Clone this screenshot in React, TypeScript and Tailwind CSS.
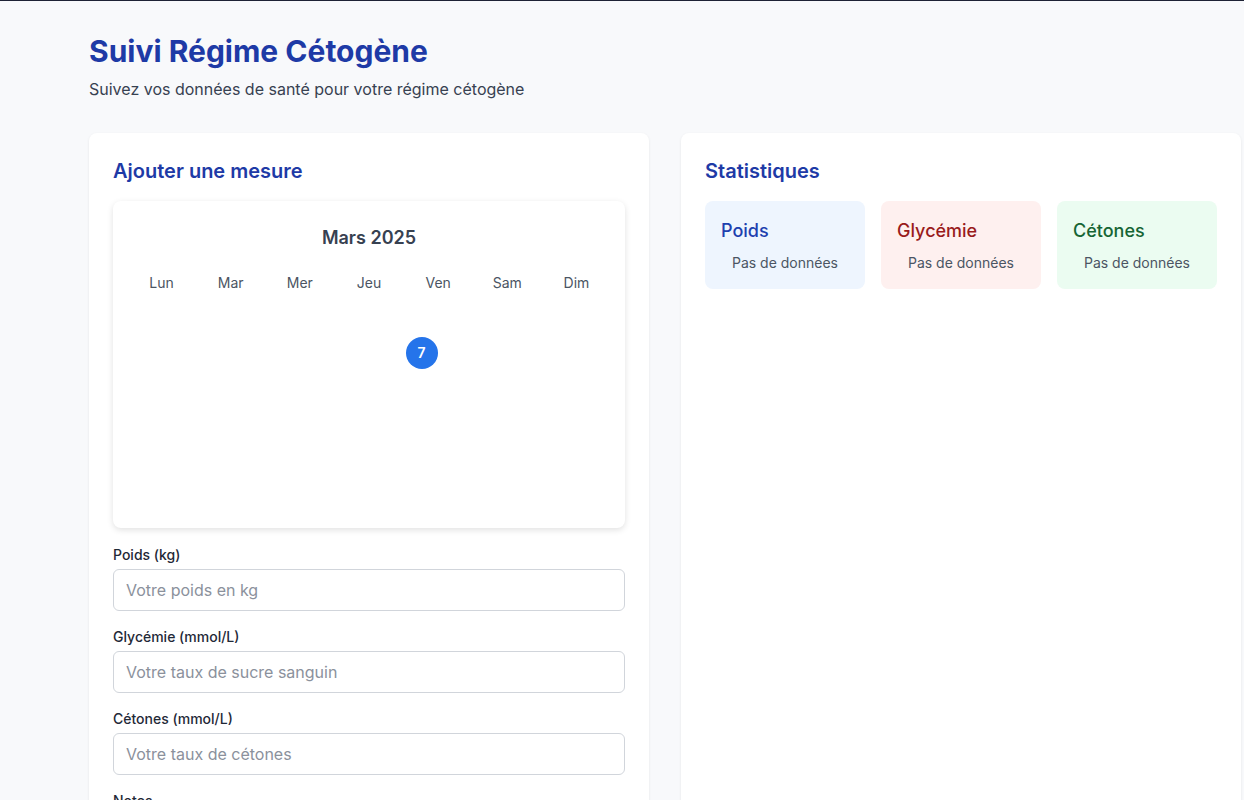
import React from 'react';

const days = ['Lun', 'Mar', 'Mer', 'Jeu', 'Ven', 'Sam', 'Dim'];

const fields = [
  { label: 'Poids (kg)', placeholder: 'Votre poids en kg' },
  { label: 'Glycémie (mmol/L)', placeholder: 'Votre taux de sucre sanguin' },
  { label: 'Cétones (mmol/L)', placeholder: 'Votre taux de cétones' },
];

const stats = [
  { title: 'Poids', box: 'bg-[#eef5fe]', text: 'text-[#1e40af]' },
  { title: 'Glycémie', box: 'bg-[#fef0ef]', text: 'text-[#991b1b]' },
  { title: 'Cétones', box: 'bg-[#ebfcf1]', text: 'text-[#166534]' },
];

function Calendar() {
  return (
    <div className="h-[327px] rounded-lg bg-white px-[14px] pt-[23px] shadow-[0_2px_6px_rgba(0,0,0,0.12)]">
      <h3 className="text-center text-lg font-semibold text-[#374151]">Mars 2025</h3>
      <div className="mt-[21px] grid grid-cols-7">
        {days.map((d) => (
          <div key={d} className="text-center text-sm text-[#4b5563]">
            {d}
          </div>
        ))}
      </div>
      <div className="mt-[44px] grid grid-cols-7">
        {days.map((d, i) => (
          <div key={d} className="h-8 pl-[2px]">
            {i === 4 && (
              <div className="flex h-8 w-8 items-center justify-center rounded-full bg-[#2574ea] text-sm font-semibold text-white">
                7
              </div>
            )}
          </div>
        ))}
      </div>
    </div>
  );
}

export default function App() {
  return (
    <div
      className="min-h-screen overflow-hidden bg-[#f8f9fb]"
      style={{ fontFamily: 'Inter, "Noto Sans", sans-serif' }}
    >
      <div className="h-px bg-[#1e2235]" />
      <div className="ml-[89px] w-[1152px] pt-8">
        <h1 className="text-3xl font-bold text-[#1e3aa6]">Suivi Régime Cétogène</h1>
        <p className="mt-2 text-base text-[#374151]">Suivez vos données de santé pour votre régime cétogène</p>

        <div className="mt-8 grid grid-cols-2 gap-8">
          {/* Formulaire */}
          <div className="rounded-lg bg-white p-6 pb-10 shadow-[0_1px_3px_rgba(0,0,0,0.08)]">
            <h2 className="text-xl font-semibold text-[#1e3aa6]">Ajouter une mesure</h2>
            <div className="mt-4">
              <Calendar />
            </div>
            <div className="mt-[17px] flex flex-col gap-4">
              {fields.map((f) => (
                <div key={f.label}>
                  <label className="mb-1 block text-sm font-medium text-[#1f2937]">{f.label}</label>
                  <input
                    type="text"
                    placeholder={f.placeholder}
                    className="w-full rounded-md border border-[#d1d5db] px-3 py-2 text-base text-[#111827] placeholder:text-[#8b919c] outline-none"
                  />
                </div>
              ))}
              <div>
                <label className="mb-1 block text-sm font-medium text-[#1f2937]">Notes</label>
                <textarea className="h-20 w-full rounded-md border border-[#d1d5db] px-3 py-2 text-base outline-none" />
              </div>
            </div>
          </div>

          {/* Statistiques */}
          <div className="min-h-[700px] rounded-lg bg-white p-6 shadow-[0_1px_3px_rgba(0,0,0,0.08)]">
            <h2 className="text-xl font-semibold text-[#1e3aa6]">Statistiques</h2>
            <div className="mt-4 grid grid-cols-3 gap-4">
              {stats.map((s) => (
                <div key={s.title} className={`rounded-lg p-4 ${s.box}`}>
                  <h3 className={`text-lg font-medium ${s.text}`}>{s.title}</h3>
                  <p className="mt-2 text-center text-sm text-[#4b5563]">Pas de données</p>
                </div>
              ))}
            </div>
          </div>
        </div>
      </div>
    </div>
  );
}
